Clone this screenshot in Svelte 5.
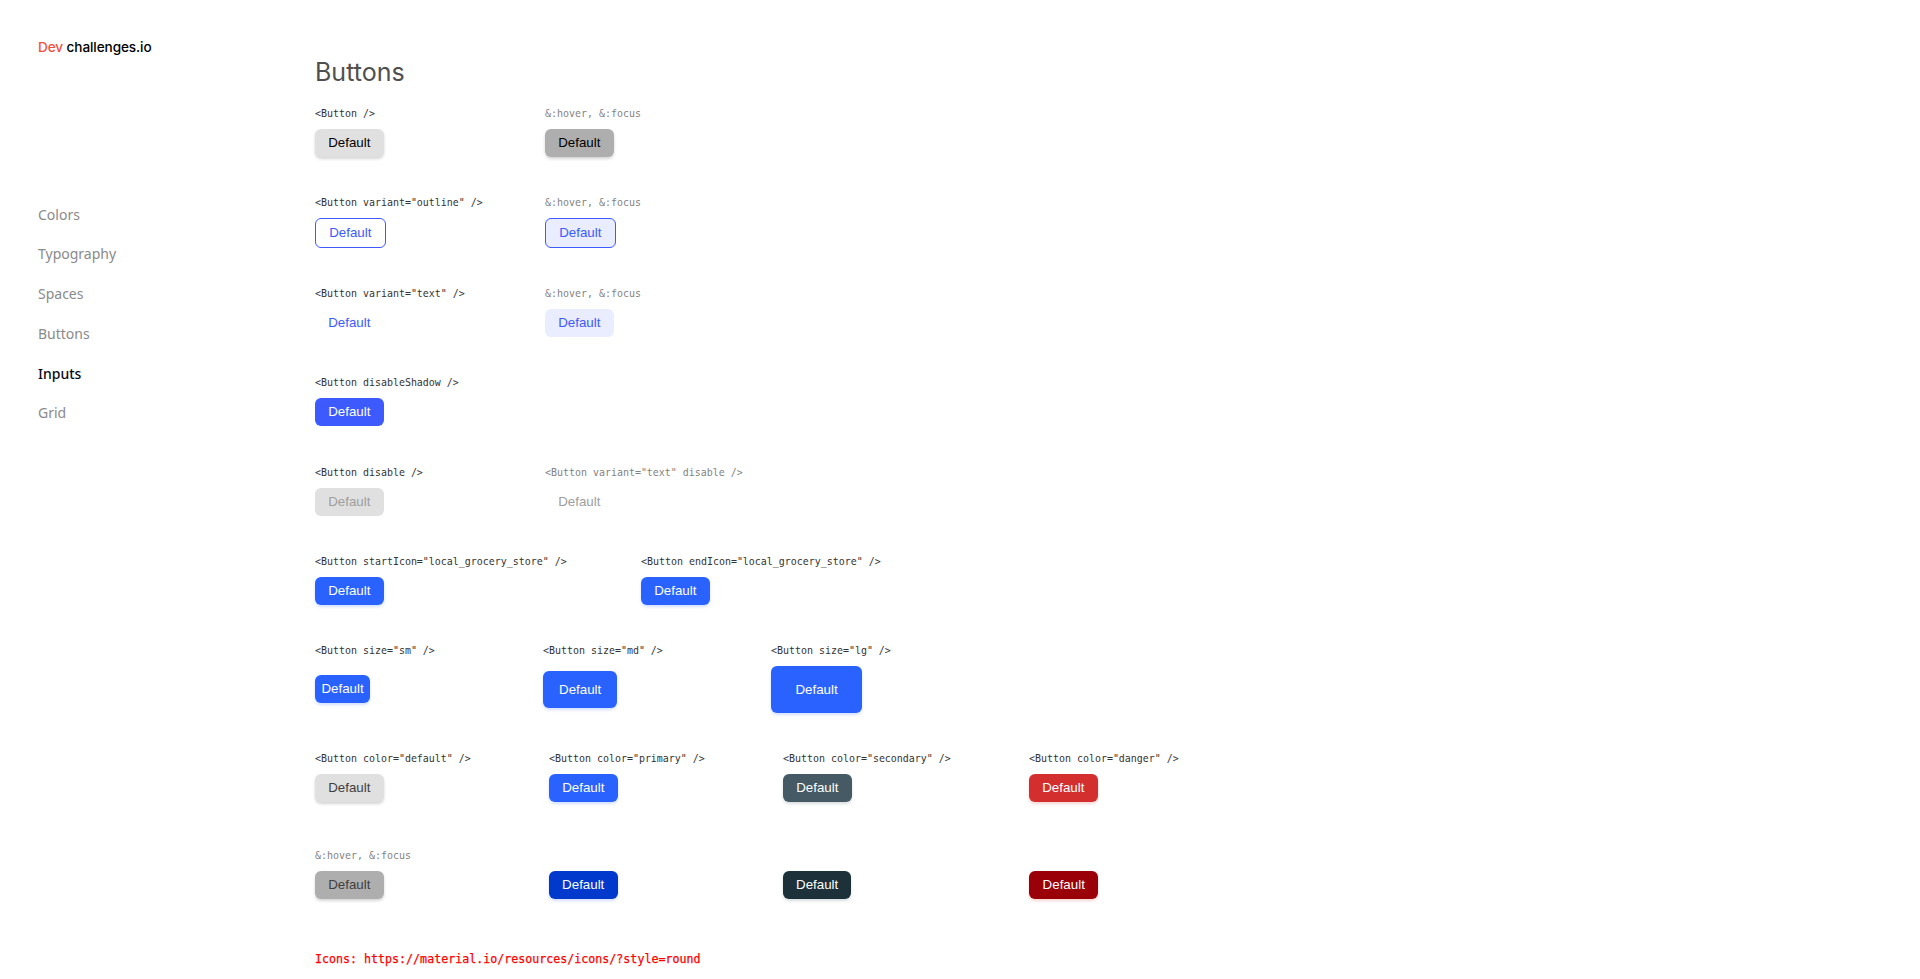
<script>
  const nav = ["Colors", "Typography", "Spaces", "Buttons", "Inputs", "Grid"]
  const active = "Inputs"

  // each row: column class + list of [label, button classes]
  const rows = [
    { cols: "c230", items: [['<Button />', 'b-default'], ['&:hover, &:focus', 'b-default hov', true]] },
    { cols: "c230", items: [['<Button variant="outline" />', 'b-outline'], ['&:hover, &:focus', 'b-outline hov', true]] },
    { cols: "c230", items: [['<Button variant="text" />', 'b-text'], ['&:hover, &:focus', 'b-text hov', true]] },
    { cols: "c230 wide", items: [['<Button disableShadow />', 'b-flat']] },
    { cols: "c230", items: [['<Button disable />', 'b-disabled'], ['<Button variant="text" disable />', 'b-disabled-text', true]] },
    { cols: "c326", items: [['<Button startIcon="local_grocery_store" />', 'b-primary'], ['<Button endIcon="local_grocery_store" />', 'b-primary']] },
    { cols: "c228", center: true, items: [['<Button size="sm" />', 'b-primary sm'], ['<Button size="md" />', 'b-primary md'], ['<Button size="lg" />', 'b-primary lg']] },
    { cols: "gap78", items: [['<Button color="default" />', 'b-default dim'], ['<Button color="primary" />', 'b-primary'], ['<Button color="secondary" />', 'b-secondary'], ['<Button color="danger" />', 'b-danger']] },
  ]
  // last row lines up under the color row
  const hoverRow = ['b-default hov dim', 'b-primary hov', 'b-secondary hov', 'b-danger hov']
</script>

<div class="page">
  <aside class="side">
    <div class="logo"><span class="dev">Dev</span> challenges.io</div>
    <nav class="nav">
      {#each nav as n}
        <a href="#{n}" class="link" class:on={n == active}>{n}</a>
      {/each}
    </nav>
  </aside>

  <main class="main">
    <h1 class="title">Buttons</h1>

    {#each rows as r}
      <section class="row {r.cols}" class:center={r.center}>
        {#each r.items as it}
          <div class="cell">
            <code class="label" class:muted={it[2]}>{it[0]}</code>
            <div class="slot"><button class="btn {it[1]}">Default</button></div>
          </div>
        {/each}
      </section>
    {/each}

    <section class="row last">
      <code class="label muted">&amp;:hover, &amp;:focus</code>
      <div class="hover-btns">
        {#each hoverRow as cls}
          <button class="btn {cls}">Default</button>
        {/each}
      </div>
    </section>

    <p class="icons">Icons: https://material.io/resources/icons/?style=round</p>
  </main>
</div>

<style>
  :global(body) {
    margin: 0;
    background: #fff;
  }

  .page {
    display: flex;
    min-height: 979px;
  }

  .side {
    width: 315px;
    flex: none;
    padding: 38px 0 0 38px;
    box-sizing: border-box;
  }

  .logo {
    font-family: Inter, sans-serif;
    font-size: 13.6px;
    font-weight: 500;
    line-height: 18px;
    color: #000;
    letter-spacing: -0.1px;
  }

  .dev {
    color: #f2503c;
  }

  .nav {
    display: flex;
    flex-direction: column;
    margin-top: 148.5px;
    gap: 19.8px;
  }

  .link {
    font-family: "Noto Sans", sans-serif;
    font-size: 14px;
    line-height: 20px;
    color: #8a8a8a;
    text-decoration: none;
  }

  .link.on {
    color: #0b0b14;
    font-weight: 500;
  }

  .main {
    flex: 1;
    padding-top: 54px;
  }

  .title {
    margin: 0 0 15.5px;
    font-family: Inter, sans-serif;
    font-size: 25px;
    font-weight: 400;
    line-height: 36px;
    color: #4f4f4f;
  }

  .row {
    display: flex;
    margin-bottom: 38px;
  }

  .row.wide { margin-bottom: 39px; }

  .c230 .cell { width: 230px; }
  .c326 .cell { width: 326px; }
  .c228 .cell { width: 228px; }
  .gap78 { gap: 78.2px; }

  .cell {
    display: flex;
    flex-direction: column;
  }

  .slot {
    display: flex;
    align-items: flex-start;
  }

  .center .cell:nth-child(1) .slot { margin-top: 9px; }
  .center .cell:nth-child(2) .slot { margin-top: 5px; }

  .label {
    display: block;
    font-family: "DejaVu Sans Mono", monospace;
    font-size: 9.96px;
    line-height: 15px;
    margin-bottom: 8px;
    color: #333;
    white-space: nowrap;
  }

  .label.muted {
    color: #828282;
  }

  .last {
    flex-direction: column;
    margin-top: 46px;
  }

  .hover-btns {
    display: flex;
  }

  .hover-btns .btn:nth-child(1),
  .hover-btns .btn:nth-child(2) { margin-right: 165.3px; }
  .hover-btns .btn:nth-child(3) { margin-right: 178px; }

  .btn {
    font-family: "Liberation Sans", Arial, sans-serif;
    font-size: 13.33px;
    line-height: 15px;
    padding: 6.5px 13.2px;
    border: 0;
    border-radius: 6px;
    background: none;
    box-shadow: none;
  }

  .b-default { background: #e0e0e0; color: #000; box-shadow: 0 2px 3px rgba(51, 51, 51, 0.2); }
  .b-default.hov { background: #aeaeae; }
  .b-default.dim { color: #3f3f3f; }

  .b-outline { background: #fff; color: #3d5afe; border: 1px solid #3d5afe; }
  .b-outline.hov { background: #e9edff; }

  .b-text { color: #3d5afe; }
  .b-text.hov { background: #e9edff; }

  .b-flat { background: #3d5afe; color: #fff; }

  .b-disabled { background: #e0e0e0; color: #9e9e9e; }
  .b-disabled-text { color: #9e9e9e; }

  .b-primary { background: #2962ff; color: #fff; box-shadow: 0 2px 3px rgba(41, 98, 255, 0.2); }
  .b-primary.hov { background: #0039cb; }

  .b-secondary { background: #455a64; color: #fff; box-shadow: 0 2px 3px rgba(69, 90, 100, 0.2); }
  .b-secondary.hov { background: #1c313a; }

  .b-danger { background: #d32f2f; color: #fff; box-shadow: 0 2px 3px rgba(211, 47, 47, 0.2); }
  .b-danger.hov { background: #9a0007; }

  .sm { padding: 6.5px 6.4px; }
  .md { padding: 11px 16px; }
  .lg { padding: 16px 24.4px; }

  .icons {
    margin: 53px 0 0;
    font-family: "DejaVu Sans Mono", monospace;
    font-size: 11.65px;
    font-weight: 400;
    line-height: 14px;
    color: #f00;
    -webkit-text-stroke: 0.25px #f00;
  }
</style>
